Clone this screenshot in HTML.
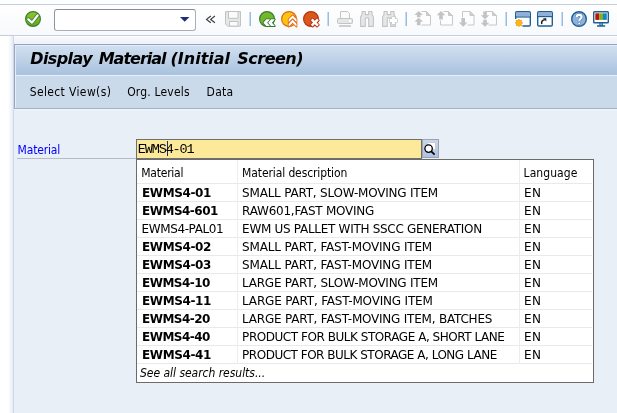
<!DOCTYPE html>
<html><head><meta charset="utf-8">
<style>
html,body{margin:0;padding:0;}
body{width:617px;height:413px;overflow:hidden;position:relative;background:#e9eff7;font-family:"DejaVu Sans Condensed","Liberation Sans",sans-serif;font-size:12px;color:#000;}
.abs{position:absolute;}
#topstrip{left:0;top:0;width:617px;height:4px;background:#fdfeff;}
#toolbar{left:0;top:4px;width:617px;height:31px;background:linear-gradient(to bottom,#ffffff,#f7f9fc);border-top:1px solid #c5cfdc;border-bottom:1px solid #c5cfdc;box-sizing:border-box;height:32px;}
#gap{left:0;top:36px;width:617px;height:8px;background:linear-gradient(to bottom,#ffffff 0,#f5f7fb 2px,#f1f1fa 8px);}
#leftfade{left:0;top:36px;width:14px;height:377px;background:linear-gradient(to right,#ffffff 0,#ffffff 8px,#e6ecf5 13px,#d3d6e8 13px,#d3d6e8 14px);}
#content{left:14px;top:109px;width:603px;height:304px;background:#e9eff7;border-top:1px solid #f1f5fb;box-sizing:border-box;}
#titlebar{left:14px;top:44px;width:603px;height:31px;background:linear-gradient(to bottom,#d2e0f0,#a9c2de);border-left:1px solid #93a8c2;border-top:1px solid #8fa6c2;box-sizing:border-box;box-shadow:inset 1px 1px 0 #e4edf7;}
.title{font-family:"DejaVu Sans","Liberation Sans",sans-serif;font-weight:bold;font-style:italic;font-size:16px;line-height:19px;white-space:nowrap;}
#appbar{left:14px;top:75px;width:603px;height:34px;background:#cbdaea;border-left:1px solid #93a8c2;border-bottom:1px solid #9fb2c9;box-sizing:border-box;box-shadow:inset 1px 1px 0 #e6eef8;}
#cmd{left:54px;top:9px;width:142px;height:22px;box-sizing:border-box;border:1px solid #a9afb8;border-top-color:#868c95;border-left-color:#8f959e;border-radius:3px;background:#fff;}
.sep{top:12px;width:2px;height:14px;background:linear-gradient(to right,#c7daf0 0,#c7daf0 1px,#9dbbe0 1px);}
#lblline{left:17px;top:158px;width:119px;height:1px;background:#b5bcc6;}
#inp{left:136px;top:139px;width:286px;height:20px;box-sizing:border-box;border:1px solid #6f6f6f;background:#fde99a;}
.mono{font-family:"Liberation Mono",monospace;font-size:13.5px;line-height:16px;white-space:pre;}
#caret{left:167px;top:141px;width:1px;height:15px;background:#1a2a80;}
#f4{left:422px;top:139px;width:17px;height:19px;box-sizing:border-box;border:1px solid #9aa3b0;background:linear-gradient(to bottom,#c9d6ec,#b0c2e2);}
#dd{left:136px;top:159px;width:458px;height:224px;box-sizing:border-box;border:1px solid #6b6b6b;background:#fff;}
.row{left:137px;width:455px;height:1px;background:#e9e9e9;}
.col{top:160px;width:1px;height:204px;background:#ececec;}
.t{white-space:nowrap;font-size:12px;line-height:15px;}
.b{font-weight:bold;}
.u{font-family:"DejaVu Sans","Liberation Sans",sans-serif;}
#wrap{position:absolute;left:0;top:0;width:617px;height:413px;will-change:transform;}

</style></head><body>
<div id="wrap">
<div class="abs" id="topstrip"></div>
<div class="abs" id="toolbar"></div>
<div class="abs" id="gap"></div>
<div class="abs" id="leftfade"></div>
<div class="abs" id="content"></div>
<div class="abs" id="titlebar"></div>
<div class="abs" id="appbar"></div>
<div class="abs" id="cmd"></div>
<div class="abs sep" style="left:249px"></div>
<div class="abs sep" style="left:327px"></div>
<div class="abs sep" style="left:405px"></div>
<div class="abs sep" style="left:505px"></div>
<div class="abs sep" style="left:561px"></div>
<svg class="abs" style="left:0;top:0" width="617" height="40" viewBox="0 0 617 40">
<defs>
<linearGradient id="gGreen" x1="0" y1="0" x2="0" y2="1"><stop offset="0" stop-color="#8ec63a"/><stop offset="1" stop-color="#62a51f"/></linearGradient>
<linearGradient id="gYel" x1="0" y1="0" x2="0" y2="1"><stop offset="0" stop-color="#ffd02a"/><stop offset="1" stop-color="#fbb414"/></linearGradient>
<linearGradient id="gRed" x1="0" y1="0" x2="0" y2="1"><stop offset="0" stop-color="#e2642a"/><stop offset="1" stop-color="#cf4a14"/></linearGradient>
</defs>
<!-- check -->
<circle cx="33" cy="19" r="7.4" fill="url(#gGreen)" stroke="#3f7f2c" stroke-width="1.2"/>
<path d="M28.3 19.2 L32 22.6 L37.6 15.4" fill="none" stroke="#3f7f2c" stroke-width="3.6" stroke-linecap="round" stroke-linejoin="round"/>
<path d="M28.3 19.2 L32 22.6 L37.6 15.4" fill="none" stroke="#fff" stroke-width="2.2" stroke-linecap="round" stroke-linejoin="round"/>
<!-- dropdown arrow -->
<path d="M180 17 L189.4 17 L184.7 21.8 Z" fill="#1c2f78"/>
<!-- << -->
<path d="M210.800 16 L206.600 19.400 L210.800 22.800 M214.900 16 L210.700 19.400 L214.900 22.800" fill="none" stroke="#3c3c3c" stroke-width="1.200"/>
<!-- save -->
<path d="M225.5 11.5 H240.5 V26.1 H227.6 L225.5 24 Z" fill="#e6e6e6" stroke="#c2c2c2" stroke-width="1"/>
<rect x="228.5" y="11.5" width="9.5" height="6.8" fill="#fbfbfb" stroke="#c2c2c2"/>
<rect x="229.5" y="21.5" width="8.5" height="4.6" fill="#fbfbfb" stroke="#c2c2c2"/>
<!-- green back -->
<circle cx="267" cy="19" r="7.400" fill="#74b72a" stroke="#3b7f2e" stroke-width="1.200"/>
<path d="M263.4 22.7 L266.3 19.3 H270.0 L267.1 22.7 L270.0 26.1 H266.3 Z M268.2 22.7 L271.1 19.3 H274.8 L271.9 22.7 L274.8 26.1 H271.1 Z" fill="#fff" stroke="#2f7a2f" stroke-width="1.800" paint-order="stroke" stroke-linejoin="round"/>
<!-- yellow up -->
<circle cx="289" cy="19" r="7.400" fill="#fdc513" stroke="#e36a10" stroke-width="1.200"/>
<path d="M292.6 15.4 L296.5 19.3 V22.2 L292.6 18.3 L288.7 22.2 V19.3 Z" fill="#fff" stroke="#e36a10" stroke-width="1.800" paint-order="stroke" stroke-linejoin="round"/>
<path d="M292.6 19.8 L296.5 23.7 V26.6 L292.6 22.7 L288.7 26.6 V23.7 Z" fill="#fff" stroke="#e36a10" stroke-width="1.800" paint-order="stroke" stroke-linejoin="round"/>
<!-- red cancel -->
<circle cx="311" cy="19" r="7.400" fill="#d9581a" stroke="#c03010" stroke-width="1.200"/>
<path d="M317.03 18.60 L318.80 20.37 L316.57 22.60 L318.80 24.83 L317.03 26.60 L314.80 24.37 L312.57 26.60 L310.80 24.83 L313.03 22.60 L310.80 20.37 L312.57 18.60 L314.80 20.83 Z" fill="#fff" stroke="#b8300f" stroke-width="1.800" paint-order="stroke" stroke-linejoin="round"/>
<!-- printer -->
<g fill="#e6e6e6" stroke="#c4c4c4">
<path d="M340.5 18 V11.5 H347.5 L349.5 13.5 V18" fill="#fbfbfb"/>
<rect x="337.5" y="18.5" width="15" height="5" rx="1"/>
<path d="M339 26 H351" stroke-width="1.6"/>
</g>
<rect x="349" y="20" width="2" height="2" fill="#fff"/>
<!-- binoculars -->
<path d="M362.0 11.5 H365.3 V14.6 H368.7 V11.5 H372.0 V14.4 L373.4 17 V26.4 H368.7 V18.8 Q368.7 17.6 367.0 17.6 Q365.3 17.6 365.3 18.8 V26.4 H360.6 V17 L362.0 14.4 Z" fill="#e7e7e7" stroke="#c4c4c4" stroke-width="1.100" stroke-linejoin="round"/>
<path d="M384.0 11.5 H387.3 V14.6 H390.7 V11.5 H394.0 V14.4 L395.4 17 V26.4 H390.7 V18.8 Q390.7 17.6 389.0 17.6 Q387.3 17.6 387.3 18.8 V26.4 H382.6 V17 L384.0 14.4 Z" fill="#e7e7e7" stroke="#c4c4c4" stroke-width="1.100" stroke-linejoin="round"/>
<path d="M392 17 H394.900 V19.100 H397 V22 H394.900 V24 H392 V22 H389.800 V19.100 H392 Z" fill="#fff" stroke="#c9c9c9" stroke-width="1.600" paint-order="stroke" stroke-linejoin="round"/>
<!-- pages -->
<g fill="#fdfdfd" stroke="#c8c8c8">
<path d="M421.500 11.500 H426.500 L430.500 15.500 V25 H421.500"/>
<path d="M426.500 11.500 V15.500 H430.500 Z" fill="#cfcfcf"/>
<path d="M440.500 20.500 V25 H452.500 V15.500 L448.500 11.500 H443.500"/>
<path d="M448.500 11.500 V15.500 H452.500 Z" fill="#cfcfcf"/>
<path d="M462.500 17.500 V11.500 H470 L474 15.500 V25 H467.500"/>
<path d="M470 11.500 V15.500 H474 Z" fill="#cfcfcf"/>
<path d="M485 11.500 H492.500 L496.500 15.500 V25 H488.500" fill="none"/>
<path d="M492.500 11.500 V15.500 H496.500 Z" fill="#cfcfcf"/>
</g>
<g fill="#c3c3c3">
<path d="M418.700 11 L423 15 H420.500 V17.300 H416.900 V15 H414.400 Z"/>
<path d="M418.700 17.800 L423 21.800 H420.500 V25.200 H416.900 V21.800 H414.400 Z"/>
<path d="M441 11 L445.300 15.200 H442.800 V19.500 H439.200 V15.200 H436.700 Z"/>
<path d="M463.200 26.700 L467.500 22.500 H465 V18 H461.400 V22.500 H458.900 Z"/>
<path d="M485 19.200 L489.300 15.200 H486.800 V11.500 H483.200 V15.200 H480.700 Z"/>
<path d="M485 26.700 L489.300 22.700 H486.800 V19.700 H483.200 V22.700 H480.700 Z"/>
</g>
<!-- window new -->
<rect x="515.7" y="11.700" width="14.600" height="14.300" rx="1.2" fill="#fff" stroke="#1f5f94" stroke-width="1.4"/>
<rect x="516.400" y="12.400" width="13.200" height="4" fill="#8fb0da"/>
<path d="M515.700 17 H530.300" stroke="#1f5f94" stroke-width="1.2"/>
<rect x="513" y="19" width="9.500" height="9" fill="#fbfcfe"/>
<g stroke="#f39a12" stroke-width="1.300"><path d="M518.900 19 V26.800 M515 22.900 H522.800 M516.100 20.100 L521.700 25.700 M521.700 20.100 L516.100 25.700"/></g>
<circle cx="518.900" cy="22.900" r="2.600" fill="#fdbd10" stroke="#f6a30f" stroke-width="0.800"/>
<!-- window shortcut -->
<rect x="537.700" y="11.700" width="14.600" height="14.300" rx="1.200" fill="#fff" stroke="#1f5f94" stroke-width="1.400"/>
<rect x="538.400" y="12.400" width="13.200" height="4" fill="#8fb0da"/>
<path d="M537.700 16.600 H552.300" stroke="#1f5f94" stroke-width="1.200"/>
<path d="M541.800 24 C541 21.500 542.500 20 544.800 19.800" fill="none" stroke="#222" stroke-width="1.600"/>
<path d="M543 18.300 H546.300 V21.600 Z" fill="#222"/>
<!-- help -->
<circle cx="579" cy="19" r="7.300" fill="#8fb0da" stroke="#1f5f94" stroke-width="1.400"/>
<path d="M576.600 17 C576.600 14.200 581.600 14.200 581.600 17 C581.600 18.800 579.200 18.800 579.200 20.800" fill="none" stroke="#4a7fb3" stroke-width="3.300"/>
<path d="M576.600 17 C576.600 14.200 581.600 14.200 581.600 17 C581.600 18.800 579.200 18.800 579.200 20.800" fill="none" stroke="#fff" stroke-width="2.100"/>
<rect x="578.100" y="22.300" width="2.200" height="2.200" fill="#fff" stroke="#4a7fb3" stroke-width="0.500"/>
<!-- monitor -->
<rect x="593.700" y="11.700" width="14.600" height="11" rx="0.800" fill="#fff" stroke="#1f5f94" stroke-width="1.400"/>
<rect x="595.300" y="13.300" width="3.800" height="6.600" fill="#cc0c0c"/>
<rect x="599.100" y="13.300" width="3.900" height="6.600" fill="#7ab51d"/>
<rect x="603" y="13.300" width="3.800" height="6.600" fill="#1583cc"/>
<rect x="599.800" y="23" width="2.600" height="2.400" fill="#8fb0da" stroke="#1f5f94" stroke-width="0.900"/>
<path d="M597 26 H605.200" stroke="#1f5f94" stroke-width="1.500"/>
</svg>

<div class="abs" id="lblline"></div>
<div class="abs" id="inp"></div>
<div class="abs" id="caret"></div>
<div class="abs" id="f4"></div>
<svg class="abs" style="left:422px;top:139px" width="17" height="19" viewBox="422 139 17 19">
<rect x="427.500" y="142.500" width="8" height="7" fill="#fff" stroke="#c9ced6" stroke-width="1"/>
<circle cx="428.600" cy="148.600" r="3.700" fill="#fff" stroke="#000" stroke-width="1.300"/>
<path d="M431.300 151.300 L434.600 154.600" stroke="#000" stroke-width="1.700"/>
</svg>

<div class="abs" id="dd"></div>
<div class="abs row" style="top:183px"></div>
<div class="abs row" style="top:201px"></div>
<div class="abs row" style="top:219px"></div>
<div class="abs row" style="top:237px"></div>
<div class="abs row" style="top:255px"></div>
<div class="abs row" style="top:273px"></div>
<div class="abs row" style="top:291px"></div>
<div class="abs row" style="top:309px"></div>
<div class="abs row" style="top:327px"></div>
<div class="abs row" style="top:345px"></div>
<div class="abs row" style="top:363px"></div>
<div class="abs col" style="left:237px"></div>
<div class="abs col" style="left:519px"></div>
<div class="abs title" id="t1" style="left:30.30px;top:49.00px;letter-spacing:-0.617px;">Display</div>
<div class="abs title" id="t2" style="left:98.70px;top:49.00px;letter-spacing:-1.000px;">Material</div>
<div class="abs title" id="t3" style="left:170.50px;top:49.00px;letter-spacing:0.000px;">(Initial</div>
<div class="abs title" id="t4" style="left:237.30px;top:49.00px;letter-spacing:-0.517px;">Screen)</div>
<div class="abs t" id="m1" style="left:29.70px;top:84.80px;letter-spacing:0.369px;">Select View(s)</div>
<div class="abs t" id="m2" style="left:127.20px;top:84.80px;letter-spacing:0.180px;">Org. Levels</div>
<div class="abs t" id="m3" style="left:206.60px;top:84.80px;letter-spacing:0.267px;">Data</div>
<div class="abs t" id="lbl" style="left:17.60px;top:142.80px;letter-spacing:-0.186px;color:#0000ff;">Material</div>
<div class="abs t" id="h1" style="left:141.30px;top:166.20px;letter-spacing:-0.243px;">Material</div>
<div class="abs t" id="h2" style="left:242.10px;top:166.20px;letter-spacing:-0.111px;">Material description</div>
<div class="abs t" id="h3" style="left:523.60px;top:166.20px;letter-spacing:0.057px;">Language</div>
<div class="abs t u b" id="a0" style="left:142.00px;top:186.20px;letter-spacing:-0.386px;">EWMS4-01</div>
<div class="abs t u" id="d0" style="left:242.10px;top:186.20px;letter-spacing:-0.211px;">SMALL PART, SLOW-MOVING ITEM</div>
<div class="abs t u" id="e0" style="left:524.00px;top:186.20px;letter-spacing:0.500px;">EN</div>
<div class="abs t u b" id="a1" style="left:142.00px;top:204.20px;letter-spacing:-0.500px;">EWMS4-601</div>
<div class="abs t u" id="d1" style="left:242.10px;top:204.20px;letter-spacing:-0.241px;">RAW601,FAST MOVING</div>
<div class="abs t u" id="e1" style="left:524.00px;top:204.20px;letter-spacing:0.500px;">EN</div>
<div class="abs t u" id="a2" style="left:141.60px;top:222.20px;letter-spacing:-0.400px;">EWMS4-PAL01</div>
<div class="abs t u" id="d2" style="left:242.10px;top:222.20px;letter-spacing:-0.294px;">EWM US PALLET WITH SSCC GENERATION</div>
<div class="abs t u" id="e2" style="left:524.00px;top:222.20px;letter-spacing:0.500px;">EN</div>
<div class="abs t u b" id="a3" style="left:142.00px;top:240.20px;letter-spacing:-0.386px;">EWMS4-02</div>
<div class="abs t u" id="d3" style="left:242.10px;top:240.20px;letter-spacing:-0.178px;">SMALL PART, FAST-MOVING ITEM</div>
<div class="abs t u" id="e3" style="left:524.00px;top:240.20px;letter-spacing:0.500px;">EN</div>
<div class="abs t u b" id="a4" style="left:142.00px;top:258.20px;letter-spacing:-0.386px;">EWMS4-03</div>
<div class="abs t u" id="d4" style="left:242.10px;top:258.20px;letter-spacing:-0.178px;">SMALL PART, FAST-MOVING ITEM</div>
<div class="abs t u" id="e4" style="left:524.00px;top:258.20px;letter-spacing:0.500px;">EN</div>
<div class="abs t u b" id="a5" style="left:142.00px;top:276.20px;letter-spacing:-0.529px;">EWMS4-10</div>
<div class="abs t u" id="d5" style="left:242.10px;top:276.20px;letter-spacing:-0.244px;">LARGE PART, SLOW-MOVING ITEM</div>
<div class="abs t u" id="e5" style="left:524.00px;top:276.20px;letter-spacing:0.500px;">EN</div>
<div class="abs t u b" id="a6" style="left:142.00px;top:294.20px;letter-spacing:-0.386px;">EWMS4-11</div>
<div class="abs t u" id="d6" style="left:242.10px;top:294.20px;letter-spacing:-0.185px;">LARGE PART, FAST-MOVING ITEM</div>
<div class="abs t u" id="e6" style="left:524.00px;top:294.20px;letter-spacing:0.500px;">EN</div>
<div class="abs t u b" id="a7" style="left:142.00px;top:312.20px;letter-spacing:-0.529px;">EWMS4-20</div>
<div class="abs t u" id="d7" style="left:242.10px;top:312.20px;letter-spacing:-0.217px;">LARGE PART, FAST-MOVING ITEM, BATCHES</div>
<div class="abs t u" id="e7" style="left:524.00px;top:312.20px;letter-spacing:0.500px;">EN</div>
<div class="abs t u b" id="a8" style="left:142.00px;top:330.20px;letter-spacing:-0.529px;">EWMS4-40</div>
<div class="abs t u" id="d8" style="left:242.10px;top:330.20px;letter-spacing:-0.454px;">PRODUCT FOR BULK STORAGE A, SHORT LANE</div>
<div class="abs t u" id="e8" style="left:524.00px;top:330.20px;letter-spacing:0.500px;">EN</div>
<div class="abs t u b" id="a9" style="left:142.00px;top:348.20px;letter-spacing:-0.386px;">EWMS4-41</div>
<div class="abs t u" id="d9" style="left:242.10px;top:348.20px;letter-spacing:-0.489px;">PRODUCT FOR BULK STORAGE A, LONG LANE</div>
<div class="abs t u" id="e9" style="left:524.00px;top:348.20px;letter-spacing:0.500px;">EN</div>
<div class="abs mono" id="inptxt" style="left:137.80px;top:142.00px;letter-spacing:-1.143px;">EWMS4-01</div>
<div class="abs t" id="see" style="left:140.00px;top:366.20px;letter-spacing:-0.029px;font-style:italic;">See all search results...</div>
</div>
</body></html>
